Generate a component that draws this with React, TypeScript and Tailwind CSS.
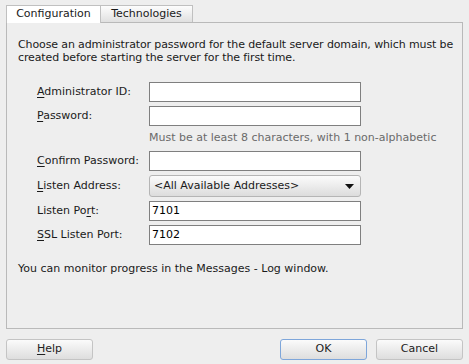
import React from "react";

const font = { fontFamily: '"DejaVu Sans", "Liberation Sans", sans-serif' };

function Mn({ children }: { children: React.ReactNode }) {
    return <span className="underline underline-offset-2">{children}</span>;
}

function Field({ label, value = "" }: { label: React.ReactNode; value?: string }) {
    return (
        <div className="flex items-center h-[20px]">
            <div className="w-[112px] shrink-0">{label}</div>
            <div className="w-[212px] h-[20px] bg-white border border-[#7f7f7f] pl-[2px] flex items-center text-black">
                {value}
            </div>
        </div>
    );
}

function Button({ children, def = false }: { children: React.ReactNode; def?: boolean }) {
    return (
        <button
            className={`w-[87px] h-[21px] rounded-[3px] border bg-gradient-to-b from-[#fbfbfb] via-[#ececec] to-[#dedede] text-[#222] ${
                def ? "border-[#7ea6da]" : "border-[#c4c4c4]"
            }`}
        >
            {children}
        </button>
    );
}

export default function App() {
    return (
        <div
            className="w-[469px] h-[364px] bg-[#eeeeee] text-[11px] text-[#1a1a1a] pt-[4px] px-[6px] overflow-hidden"
            style={font}
        >
            {/* Tabs */}
            <div className="flex h-[18px] items-end">
                <div className="w-[95px] h-[18px] bg-white border-l border-t border-r border-[#c0c0c0] flex items-center justify-center relative top-[1px] z-10">
                    Configuration
                </div>
                <div className="w-[92px] h-[17px] border-t border-r border-[#c0c0c0] bg-gradient-to-b from-[#fdfdfd] to-[#e0e0e0] flex items-center justify-center">
                    Technologies
                </div>
            </div>

            {/* Panel */}
            <div className="h-[307px] border border-[#b9b9b9] bg-[#eeeeee] pl-[11px] pt-[15px]">
                <p className="leading-[13px] whitespace-nowrap tracking-[-0.12px]">
                    Choose an administrator password for the default server domain, which must be
                    <br />
                    created before starting the server for the first time.
                </p>

                <div className="mt-[18px] pl-[19px] flex flex-col">
                    <Field label={<><Mn>A</Mn>dministrator ID:</>} />
                    <div className="h-[4px]" />
                    <Field label={<><Mn>P</Mn>assword:</>} />
                    <div className="h-[25px] pl-[112px] flex items-center text-[#6a6a6a]">
                        Must be at least 8 characters, with 1 non-alphabetic
                    </div>
                    <Field label={<><Mn>C</Mn>onfirm Password:</>} />
                    <div className="h-[4px]" />
                    <div className="flex items-center h-[22px]">
                        <div className="w-[112px] shrink-0">
                            <Mn>L</Mn>isten Address:
                        </div>
                        <div className="w-[212px] h-[22px] rounded-[3px] border border-[#b5b5b5] bg-gradient-to-b from-[#fbfbfb] via-[#ececec] to-[#dcdcdc] pl-[4px] pr-[6px] flex items-center justify-between">
                            <span>&lt;All Available Addresses&gt;</span>
                            <svg width="9" height="5" viewBox="0 0 9 5">
                                <path d="M0 0 H9 L4.5 5 Z" fill="#111" />
                            </svg>
                        </div>
                    </div>
                    <div className="h-[4px]" />
                    <Field label={<>Listen Po<Mn>r</Mn>t:</>} value="7101" />
                    <div className="h-[4px]" />
                    <Field label={<><Mn>S</Mn>SL Listen Port:</>} value="7102" />
                </div>

                <p className="mt-[16px]">You can monitor progress in the Messages - Log window.</p>
            </div>

            {/* Buttons */}
            <div className="mt-[10px] flex items-center">
                <Button>
                    <Mn>H</Mn>elp
                </Button>
                <div className="flex-1" />
                <Button def>OK</Button>
                <div className="w-[9px]" />
                <Button>Cancel</Button>
            </div>
        </div>
    );
}
